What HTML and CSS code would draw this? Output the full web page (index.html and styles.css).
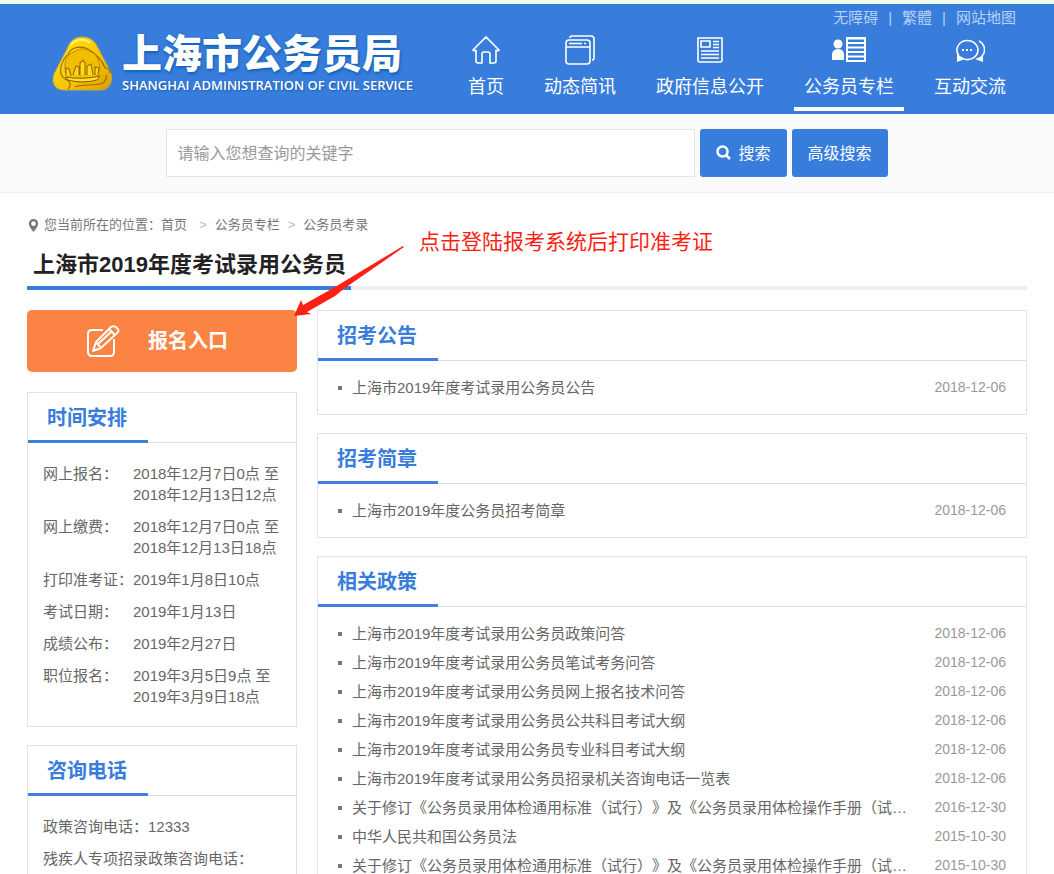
FILE: index.html
```html
<!DOCTYPE html>
<html lang="zh-CN">
<head>
<meta charset="utf-8">
<title>上海市公务员局</title>
<link rel="stylesheet" href="styles.css">
</head>
<body>
<header class="site-header">
  <div class="header-inner">
    <a class="logo" href="#">
      <svg class="logo-mark" viewBox="0 0 60 56" aria-hidden="true">
        <defs>
          <linearGradient id="gold" x1="0" y1="0" x2="1" y2="1">
            <stop offset="0" stop-color="#ffe61a"/><stop offset=".6" stop-color="#f7c400"/><stop offset="1" stop-color="#d99a00"/>
          </linearGradient>
        </defs>
        <path d="M30 1C37 1 42 4 45 10L58 35C62 44 58 54 49 54H12C3 54-1 47 2 38L15 13C18 4 24 1 30 1Z" fill="url(#gold)" stroke="#c9a53c" stroke-width="1"/>
        <path d="M16 20C17 12 27 9 36 13C44 17 51 26 53 32C56 32 58 34 58 37M15 19C8 28 5 40 15 44C20 47 18 51 16 53M23 51C28 48 44 50 51 47C54 45 55 41 54 39" fill="none" stroke="#9c6c00" stroke-width="1.2"/>
        <path d="M24 15C29 12 34 12 38 16C45 17 46 24 48 30C48 40 41 46 30 46S12 40 13 30C13 22 17 17 24 15Z" fill="#f2be00" stroke="#c08c00"/>
        <path d="M14 39V32l3 1 2 7M21 39l3-9 3 1v8M28 39V27l3-3 2 3v12M35 39v-9l4-2 2 11M43 39v-8l4 1-1 7" fill="#ffd91c" stroke="#9a6900" stroke-width="1.1"/>
        <path d="M13 41Q30 44 48 40L45 44Q30 48 16 44Z" fill="#ffe02a" stroke="#8e5d00" stroke-width="1"/>
        <path d="M19 9C23 3 33 2 38 7" fill="none" stroke="#fff27a" stroke-width="2"/>
      </svg>
      <span class="logo-text">
        <span class="logo-cn">上海市公务员局</span>
        <span class="logo-en">SHANGHAI ADMINISTRATION OF CIVIL SERVICE</span>
      </span>
    </a>
    <div class="header-right">
      <div class="top-links"><a href="#">无障碍</a><span>|</span><a href="#">繁體</a><span>|</span><a href="#">网站地图</a></div>
      <nav class="nav">
        <a href="#"><svg viewBox="0 0 30 30"><path d="M2 15L15 2 28 15Q28 16 25 15.500V26Q25 28 23 28H19V19Q19 17 17 17H13Q11 17 11 19V28H7Q5 28 5 26V15.500Q2 16 2 15Z"/></svg>首页</a>
        <a href="#"><svg viewBox="0 0 30 30"><rect x="1" y="5" width="24" height="24" rx="3"/><path d="M5 3Q5 1 7 1H26Q29 1 29 4V23Q29 25 27 25M1 12H25M4 8.500H17M19 8.500H21"/></svg>动态简讯</a>
        <a href="#"><svg viewBox="0 0 30 30"><path d="M3 3H27V25Q27 27 25 27H5Q3 27 3 25ZM6 6H15V12H6ZM18 6.500H24M18 9.500H24M18 12.500H24M6 16H24M6 19.500H24M6 23H24"/></svg>政府信息公开</a>
        <a class="active" href="#"><svg class="wide" viewBox="0 0 34 30"><g class="solid"><circle cx="6" cy="9" r="4.500"/><path d="M0 25V20Q0 14 6 14T12 20V25Z"/><path fill-rule="evenodd" d="M14 2H34V27H14ZM16 4.500V7H32V4.500ZM16 9V11.500H32V9ZM16 13.500V16H32V13.500ZM16 18V20.500H32V18ZM16 22.500V25H32V22.500Z"/></g></svg>公务员专栏</a>
        <a href="#"><svg viewBox="0 0 30 30"><path d="M3.500 20A10.500 9.500 0 1 1 9 24M24 6C31 10 31 18 26 22"/><path class="solid" d="M2 18L2 27 10 24 5 21ZM28 19V27L20 24 25 22ZM7 14h2v2H7ZM11 14h2v2h-2ZM15 14h2v2h-2Z"/></svg>互动交流</a>
      </nav>
    </div>
  </div>
</header>
<form class="search-band">
  <input class="search-input" type="text" aria-label="关键字" placeholder="请输入您想查询的关键字">
  <button class="btn" type="button"><svg viewBox="0 0 16 16" aria-hidden="true"><circle cx="6.500" cy="6.500" r="5"/><path d="M10.500 10.500L14 14"/></svg>搜索</button>
  <button class="btn" type="button">高级搜索</button>
</form>
<main class="page">
  <div class="breadcrumb">
    <svg viewBox="0 0 10 14" aria-hidden="true"><path fill-rule="evenodd" d="M5 0A5 5 0 0 1 10 5C10 8 7 11 5 14C3 11 0 8 0 5A5 5 0 0 1 5 0ZM5 2.500A2.500 2.500 0 1 0 5 7.500A2.500 2.500 0 1 0 5 2.500Z"/></svg>
    <span>您当前所在的位置：</span><a class="home" href="#">首页</a><span class="sep">&gt;</span><a href="#">公务员专栏</a><span class="sep">&gt;</span><a href="#">公务员考录</a>
  </div>
  <div class="title-bar"><h1>上海市2019年度考试录用公务员</h1></div>
  <div class="annotation">
    <svg viewBox="0 0 112 74" aria-hidden="true"><path d="M110 1L111 2 52 43 42 51 14 67 18 69 1 71 8 55 10 60 35 46 42 42Z"/></svg>
    <span>点击登陆报考系统后打印准考证</span>
  </div>
  <div class="columns">
    <aside class="side">
      <a class="entry" href="#"><svg viewBox="0 0 34 34" aria-hidden="true"><path d="M17 6H6Q2 6 2 10V28Q2 32 6 32H24Q28 32 28 28V15M7 27L10 18 25 3Q28 1 31 4T31 9L15 24ZM10 18L15 24M23 5L29 11M12 20L25 8"/></svg>报名入口</a>
      <section class="card">
        <h2>时间安排</h2>
        <dl class="schedule">
          <dt>网上报名：</dt><dd>2018年12月7日0点 至<br>2018年12月13日12点</dd>
          <dt>网上缴费：</dt><dd>2018年12月7日0点 至<br>2018年12月13日18点</dd>
          <dt>打印准考证：</dt><dd>2019年1月8日10点</dd>
          <dt>考试日期：</dt><dd>2019年1月13日</dd>
          <dt>成绩公布：</dt><dd>2019年2月27日</dd>
          <dt>职位报名：</dt><dd>2019年3月5日9点 至<br>2019年3月9日18点</dd>
        </dl>
      </section>
      <section class="card">
        <h2>咨询电话</h2>
        <div class="phones"><p>政策咨询电话：12333</p><p>残疾人专项招录政策咨询电话：</p></div>
      </section>
    </aside>
    <div class="content">
      <section class="card">
        <h2>招考公告</h2>
        <ul class="list">
          <li><a href="#">上海市2019年度考试录用公务员公告</a><time>2018-12-06</time></li>
        </ul>
      </section>
      <section class="card">
        <h2>招考简章</h2>
        <ul class="list">
          <li><a href="#">上海市2019年度公务员招考简章</a><time>2018-12-06</time></li>
        </ul>
      </section>
      <section class="card">
        <h2>相关政策</h2>
        <ul class="list">
          <li><a href="#">上海市2019年度考试录用公务员政策问答</a><time>2018-12-06</time></li>
          <li><a href="#">上海市2019年度考试录用公务员笔试考务问答</a><time>2018-12-06</time></li>
          <li><a href="#">上海市2019年度考试录用公务员网上报名技术问答</a><time>2018-12-06</time></li>
          <li><a href="#">上海市2019年度考试录用公务员公共科目考试大纲</a><time>2018-12-06</time></li>
          <li><a href="#">上海市2019年度考试录用公务员专业科目考试大纲</a><time>2018-12-06</time></li>
          <li><a href="#">上海市2019年度考试录用公务员招录机关咨询电话一览表</a><time>2018-12-06</time></li>
          <li><a href="#">关于修订《公务员录用体检通用标准（试行）》及《公务员录用体检操作手册（试…</a><time>2016-12-30</time></li>
          <li><a href="#">中华人民共和国公务员法</a><time>2015-10-30</time></li>
          <li><a href="#">关于修订《公务员录用体检通用标准（试行）》及《公务员录用体检操作手册（试…</a><time>2015-10-30</time></li>
        </ul>
      </section>
    </div>
  </div>
</main>
</body>
</html>
```

FILE: styles.css
```css
* { box-sizing: border-box; }

body {
  margin: 0;
  background: #fff;
  color: #666;
  font: 15px/21px "Liberation Sans", "Noto Sans CJK SC", sans-serif;
  text-spacing-trim: space-all;
}

a { color: inherit; text-decoration: none; }
h1, h2, p, dl, dd, ul { margin: 0; padding: 0; }

.site-header {
  background: #387ddc;
  border-top: 4px solid #edfde9;
  color: #fff;
}

.header-inner {
  display: flex;
  justify-content: space-between;
  max-width: 1000px;
  margin: 0 auto;
  padding: 0 11px 0 25px;
}

.logo { display: flex; gap: 10px; padding-top: 32px; }
.logo-mark { width: 60px; height: 56px; }
.logo-text { display: flex; flex-direction: column; }

.logo-cn {
  margin-top: -4px;
  font-size: 40px;
  font-weight: 900;
  line-height: 45px;
  text-shadow: 0 0 2px #1263b8, 1px 2px 3px #1263b8;
  white-space: nowrap;
}

.logo-en {
  font: 600 13px/16px "Open Sans", sans-serif;
  text-shadow: 1px 1px 2px #1a5cae;
  white-space: nowrap;
}

.header-right { display: flex; flex-direction: column; align-items: flex-end; }

.top-links {
  display: flex;
  gap: 10px;
  padding-top: 3px;
  color: #b6d1f4;
}

.nav { display: flex; gap: 20px; margin: 2px 0 3px; }

.nav a {
  display: flex;
  flex-direction: column;
  align-items: center;
  padding: 5px 10px 6px;
  border-bottom: 4px solid transparent;
  font-size: 18px;
  line-height: 28px;
  white-space: nowrap;
}

.nav a.active { border-color: #fff; }

.nav svg {
  width: 30px;
  height: 30px;
  margin-bottom: 8px;
  fill: none;
  stroke: #fff;
  stroke-width: 1.600;
}

.nav svg.wide { width: 34px; }
.nav .solid { fill: #fff; stroke: none; }

.search-band {
  display: flex;
  justify-content: center;
  gap: 5px;
  padding: 15px 20px;
  background: #fafafa;
  border-bottom: 1px solid #f0f0f0;
}

.search-input {
  flex: 0 1 529px;
  min-width: 0;
  height: 48px;
  padding: 2px 10px 0;
  border: 1px solid #e5e5e5;
  background: #fff;
  font: inherit;
  font-size: 16px;
}

.search-input::placeholder { color: #999; opacity: 1; }

.btn {
  display: flex;
  align-items: center;
  gap: 6px;
  padding: 0 16px;
  border: 0;
  border-radius: 3px;
  background: #387ddc;
  color: #fff;
  font: inherit;
  font-size: 16px;
  white-space: nowrap;
}

.btn svg {
  width: 16px;
  height: 16px;
  fill: none;
  stroke: #fff;
  stroke-width: 2.500;
}

.page {
  position: relative;
  max-width: 1000px;
  margin: 0 auto;
  padding-top: 21px;
}

.breadcrumb {
  display: flex;
  align-items: center;
  font-size: 13px;
  line-height: 22px;
  color: #777;
}

.breadcrumb svg { width: 11px; height: 13px; margin: 0 5px 0 1px; fill: #777; }
.breadcrumb .sep { padding: 0 8px; color: #bbb; }
.breadcrumb .home { padding-right: 4px; }

.title-bar {
  display: flex;
  margin-top: 4px;
  box-shadow: inset 0 -4px #eee;
}

.title-bar h1 {
  padding: 6px 5px 2px 6px;
  border-bottom: 4px solid #387ddc;
  color: #222;
  font-size: 22px;
  line-height: 38px;
}

.annotation {
  position: absolute;
  top: 52px;
  left: 266px;
  display: flex;
  gap: 14px;
  color: #fe1d13;
  font-size: 21px;
  line-height: 30px;
  white-space: nowrap;
}

.annotation svg { width: 112px; height: 74px; fill: #ff2015; }
.annotation span { margin-top: -18px; }

.columns {
  display: grid;
  grid-template-columns: 270px minmax(0, 1fr);
  gap: 20px;
  align-items: start;
  padding-top: 20px;
}

.side, .content { display: flex; flex-direction: column; gap: 18px; }

.entry {
  display: flex;
  align-items: center;
  justify-content: center;
  gap: 28px;
  height: 62px;
  margin-bottom: 2px;
  padding-right: 10px;
  border-radius: 5px;
  background: #fb8445;
  color: #fff;
  font-size: 20px;
  font-weight: bold;
}

.entry svg {
  width: 34px;
  height: 34px;
  fill: none;
  stroke: #fff;
  stroke-width: 2;
  stroke-linejoin: round;
}

.card { border: 1px solid #e2e2e2; }

.card h2 {
  position: relative;
  padding: 1px 0 0 19px;
  border-bottom: 1px solid #ddd;
  color: #387ddc;
  font-size: 20px;
  line-height: 48px;
}

.card h2::after {
  content: "";
  position: absolute;
  bottom: -1px;
  left: 0;
  width: 120px;
  height: 3px;
  background: #4080dc;
}

.schedule {
  display: grid;
  grid-template-columns: 90px 1fr;
  row-gap: 11px;
  padding: 20px 0 19px 15px;
}

.schedule dt, .schedule dd { white-space: nowrap; }

.phones {
  display: flex;
  flex-direction: column;
  gap: 11px;
  padding: 20px 15px 19px;
}

.list { padding: 12px 20px; list-style: none; }

.list li {
  display: flex;
  align-items: center;
  line-height: 29px;
}

.list li::before {
  content: "";
  flex: none;
  width: 4px;
  height: 4px;
  margin-right: 10px;
  background: #777;
}

.list a {
  flex: 1;
  min-width: 0;
  overflow: hidden;
  text-overflow: ellipsis;
  white-space: nowrap;
}

.list time { margin-left: 20px; color: #999; font-size: 14px; }
```
